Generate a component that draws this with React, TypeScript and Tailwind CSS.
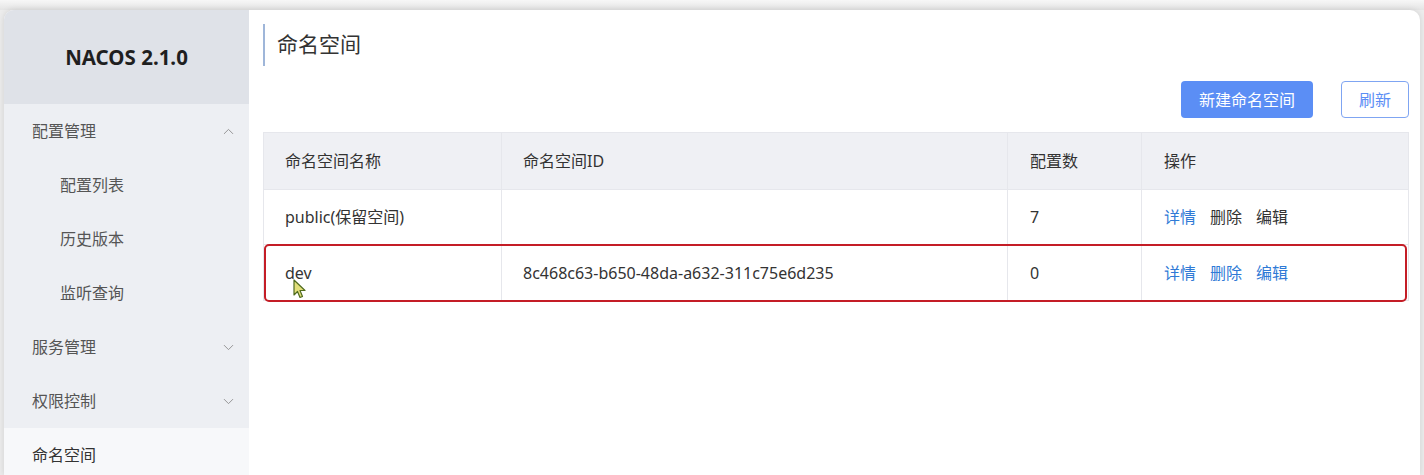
import { ChevronDown, ChevronUp } from "lucide-react";

const menu = [
  { label: "配置管理", level: 0, icon: "up" },
  { label: "配置列表", level: 1 },
  { label: "历史版本", level: 1 },
  { label: "监听查询", level: 1 },
  { label: "服务管理", level: 0, icon: "down" },
  { label: "权限控制", level: 0, icon: "down" },
  { label: "命名空间", level: 0, active: true },
];

const rows = [
  { name: "public(保留空间)", id: "", count: "7", hot: false },
  { name: "dev", id: "8c468c63-b650-48da-a632-311c75e6d235", count: "0", hot: true },
];

function Sidebar() {
  return (
    <aside className="w-[245px] shrink-0 flex flex-col bg-[#edeff3] rounded-tl-[10px] overflow-hidden">
      <div className="h-[94px] shrink-0 bg-[#dfe2e8] flex items-center justify-center">
        <span className="text-[20.5px] font-bold text-[#1f1f1f]">NACOS 2.1.0</span>
      </div>
      <nav className="flex flex-col">
        {menu.map((m) => (
          <div
            key={m.label}
            className={
              "h-[54px] flex items-center justify-between pr-[12px] text-[16px] " +
              (m.level === 1 ? "pl-[56px] " : "pl-[28px] ") +
              (m.active ? "bg-[#f7f8fa] text-[#333]" : "text-[#555]")
            }
          >
            <span>{m.label}</span>
            {m.icon === "up" && <ChevronUp size={17} strokeWidth={1.3} className="text-[#8f8f8f]" />}
            {m.icon === "down" && <ChevronDown size={17} strokeWidth={1.3} className="text-[#8f8f8f]" />}
          </div>
        ))}
      </nav>
    </aside>
  );
}

function Cursor() {
  return (
    <svg width="14" height="20" viewBox="0 0 14 20" className="absolute left-[29px] top-[34px]">
      <path d="M1 1 L1 16 L4.5 12.5 L7 18.5 L9.5 17.5 L7 11.5 L12 11.5 Z" fill="#e2df7a" stroke="#4f6b1e" strokeWidth="1.2" strokeLinejoin="round" />
    </svg>
  );
}

function NamespaceTable() {
  const cols = "grid grid-cols-[238px_506px_134px_268px]";
  return (
    <div className="relative mt-[14px] w-[1146px] border border-[#e6e7ec] text-[16px] text-[#333]">
      <div className={cols + " h-[57px] bg-[#eff0f4] border-b border-[#e6e7ec]"}>
        <div className="flex items-center pl-[21px] border-r border-[#e6e7ec]">命名空间名称</div>
        <div className="flex items-center pl-[21px] border-r border-[#e6e7ec]">命名空间ID</div>
        <div className="flex items-center pl-[22px] border-r border-[#e6e7ec]">配置数</div>
        <div className="flex items-center pl-[22px]">操作</div>
      </div>
      {rows.map((r, i) => (
        <div
          key={r.name}
          className={cols + " h-[55px] " + (i === 0 ? "border-b border-[#e6e7ec]" : "")}
        >
          <div className="relative flex items-center pl-[21px] border-r border-[#e6e7ec]">
            {r.name}
            {r.hot && <Cursor />}
          </div>
          <div className="flex items-center pl-[21px] border-r border-[#e6e7ec]">{r.id}</div>
          <div className="flex items-center pl-[22px] border-r border-[#e6e7ec]">{r.count}</div>
          <div className="flex items-center pl-[22px] gap-[14px]">
            <span className="text-[#2f7ad6]">详情</span>
            <span className={r.hot ? "text-[#2f7ad6]" : "text-[#333]"}>删除</span>
            <span className={r.hot ? "text-[#2f7ad6]" : "text-[#333]"}>编辑</span>
          </div>
        </div>
      ))}
      <div className="absolute left-0 top-[111px] w-[1143px] h-[58px] border-[2.5px] border-[#c41d26] rounded-[5px] pointer-events-none" />
    </div>
  );
}

export default function App() {
  return (
    <div className="w-[1424px] h-[475px] overflow-hidden bg-[#ececec] font-['Noto_Sans','Noto_Sans_CJK_SC',sans-serif]">
      <div className="h-[10px] bg-gradient-to-b from-[#f7f7f7] to-[#e4e4e4]" />
      <div className="ml-[4px] mr-[4px] h-[465px] flex bg-white rounded-t-[10px] shadow-[0_0_6px_rgba(0,0,0,0.12)]">
        <Sidebar />
        <main className="flex-1 pl-[14px] pr-[11px] pt-[14px]">
          <div className="flex items-center h-[42px] border-l-2 border-[#9fb6d9] pl-[12px]">
            <h1 className="text-[21px] text-[#333] font-normal">命名空间</h1>
          </div>
          <div className="flex justify-end gap-[28px] mt-[15px] w-[1146px]">
            <button className="h-[37px] w-[132px] rounded-[4px] bg-[#5b8ef5] text-white text-[16px]">新建命名空间</button>
            <button className="h-[37px] w-[68px] rounded-[4px] border border-[#7fa5f2] bg-white text-[#5b8ef5] text-[16px]">刷新</button>
          </div>
          <NamespaceTable />
        </main>
      </div>
    </div>
  );
}
